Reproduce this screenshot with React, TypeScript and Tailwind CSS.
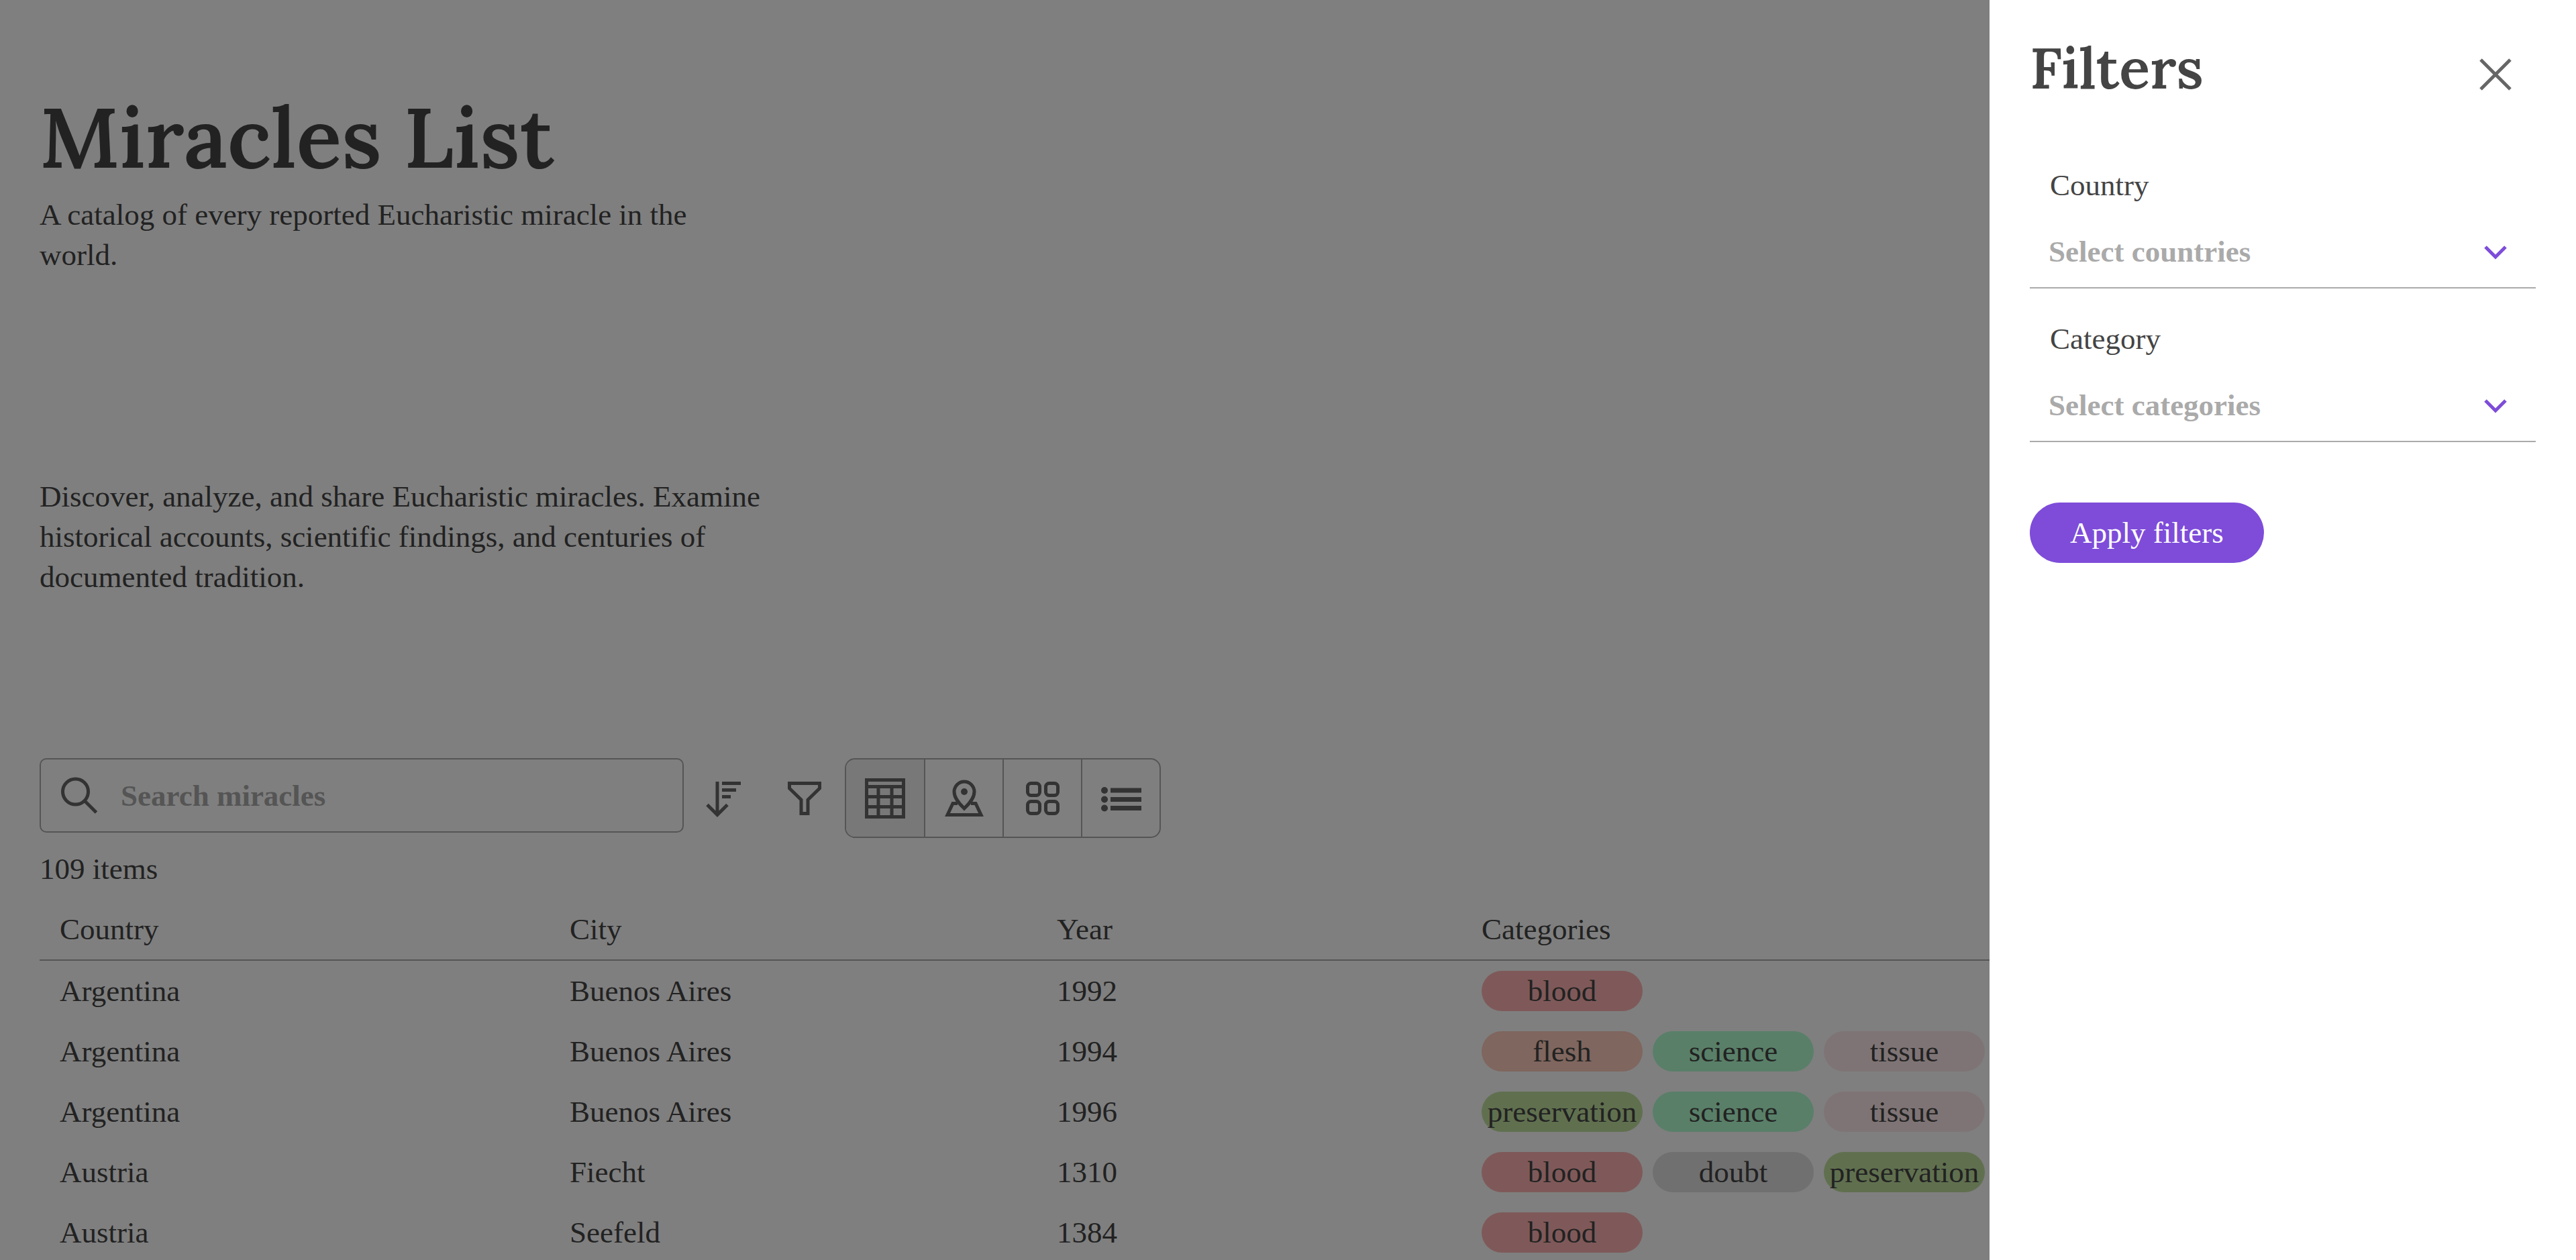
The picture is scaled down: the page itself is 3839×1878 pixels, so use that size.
const categoryColors: Record<string, string> = {
  blood: "bg-[#ffb3b3]",
  flesh: "bg-[#ffcdbd]",
  science: "bg-[#b3ffd0]",
  tissue: "bg-[#ffe8ea]",
  preservation: "bg-[#c0e09e]",
  doubt: "bg-[#e0e0e0]",
};

const miracles = [
  { country: "Argentina", city: "Buenos Aires", year: 1992, categories: ["blood"] },
  { country: "Argentina", city: "Buenos Aires", year: 1994, categories: ["flesh", "science", "tissue"] },
  { country: "Argentina", city: "Buenos Aires", year: 1996, categories: ["preservation", "science", "tissue"] },
  { country: "Austria", city: "Fiecht", year: 1310, categories: ["blood", "doubt", "preservation"] },
  { country: "Austria", city: "Seefeld", year: 1384, categories: ["blood"] },
];

function SearchIcon() {
  return (
    <svg className="h-[60px] w-[60px] shrink-0" viewBox="0 0 60 60" fill="none" stroke="#666" strokeWidth="5">
      <circle cx="22.5" cy="24" r="19" />
      <path d="M36 37.5l17.5 17.5" />
    </svg>
  );
}

function SortIcon() {
  return (
    <svg className="h-[60px] w-[60px]" viewBox="0 0 60 60" fill="none" stroke="#666" strokeWidth="5">
      <path d="M20 5v49M5 39.5l15 15 15-15M27 7.5h28M27 17.5h21M27 27.5h13" />
    </svg>
  );
}

function FilterIcon() {
  return (
    <svg className="h-[60px] w-[60px]" viewBox="0 0 60 60" fill="none" stroke="#666" strokeWidth="5">
      <path d="M7.5 7.5h45v7.5L35 32v20.5H25V32L7.5 15z" />
    </svg>
  );
}

function TableIcon() {
  return (
    <svg className="h-[60px] w-[60px]" viewBox="0 0 60 60" fill="none" stroke="#666" strokeWidth="5">
      <path d="M2.5 2.5h55v55h-55zM2.5 12.5h55M2.5 27.5h55M2.5 42.5h55M20 12.5v45M40 12.5v45" />
    </svg>
  );
}

function MapIcon() {
  return (
    <svg className="h-[60px] w-[60px]" viewBox="0 0 60 60" fill="none" stroke="#666" strokeWidth="5">
      <path d="M30 45C25 40 15 31 15 20a15 15 0 0 1 30 0c0 11-10 20-15 25z" />
      <path d="M20 37.5h-7L5 54.5h50l-8-17h-7" />
      <circle cx="30" cy="20" r="5" fill="#666" stroke="none" />
    </svg>
  );
}

function GridIcon() {
  return (
    <svg className="h-[60px] w-[60px]" viewBox="0 0 60 60" fill="none" stroke="#666" strokeWidth="5">
      <rect x="7.5" y="7.5" width="18" height="18" rx="5" />
      <rect x="34.5" y="7.5" width="18" height="18" rx="5" />
      <rect x="7.5" y="34.5" width="18" height="18" rx="5" />
      <rect x="34.5" y="34.5" width="18" height="18" rx="5" />
    </svg>
  );
}

function ListIcon() {
  return (
    <svg className="h-[60px] w-[60px]" viewBox="0 0 60 60" fill="#666">
      <circle cx="5" cy="18" r="5" />
      <circle cx="5" cy="31.5" r="5" />
      <circle cx="5" cy="44.5" r="5" />
      <path d="M14 14.500h46v7H14zM14 28h46v7H14zM14 41h46v7H14z" />
    </svg>
  );
}

function CloseIcon() {
  return (
    <svg className="h-[60px] w-[60px]" viewBox="0 0 60 60" fill="none" stroke="#666" strokeWidth="5">
      <path d="M8 8l44 44M52 8L8 52" />
    </svg>
  );
}

function ChevronIcon() {
  return (
    <svg
      className="pointer-events-none col-start-1 row-start-1 mr-[30px] h-[60px] w-[60px] self-center justify-self-end"
      viewBox="0 0 60 60"
      fill="none"
      stroke="#7e4cd9"
      strokeWidth="5"
    >
      <path d="M15 23l15 15 15-15" />
    </svg>
  );
}

const views = [
  { name: "Table view", icon: <TableIcon /> },
  { name: "Map view", icon: <MapIcon /> },
  { name: "Grid view", icon: <GridIcon /> },
  { name: "List view", icon: <ListIcon /> },
];

function FilterSelect({ id, label, placeholder }: { id: string; label: string; placeholder: string }) {
  return (
    <div className="flex flex-col">
      <label htmlFor={id} className="px-[30px]">
        {label}
      </label>
      <div className="mt-[15px] grid border-b-2 border-[#aaa]">
        <select
          id={id}
          className="col-start-1 row-start-1 h-[107px] w-full appearance-none bg-transparent pl-7 font-bold text-[#aaa]"
        >
          <option>{placeholder}</option>
        </select>
        <ChevronIcon />
      </div>
    </div>
  );
}

export default function App() {
  return (
    <div className="h-screen overflow-hidden bg-white font-['Liberation_Serif',serif] text-[45px] leading-[60px] text-[#444]">
      {/* Page */}
      <main className="flex flex-col pt-[129px] pr-[60px] pl-[59px]">
        <h1 className="mb-[11px] font-['Lora','Liberation_Serif',serif] text-[125px] leading-[150px] font-semibold">
          Miracles List
        </h1>
        <p className="max-w-[1080px]">A catalog of every reported Eucharistic miracle in the world.</p>
        <p className="mt-[300px] max-w-[1080px]">
          Discover, analyze, and share Eucharistic miracles. Examine historical accounts, scientific findings, and
          centuries of documented tradition.
        </p>

        {/* Toolbar */}
        <div className="mt-[240px] flex items-start">
          <label className="flex h-[111px] w-[960px] items-center gap-[30px] rounded-[10px] border-2 border-[#aaa] px-[29px]">
            <SearchIcon />
            <input
              type="search"
              aria-label="Search miracles"
              placeholder="Search miracles"
              className="min-w-0 flex-1 font-bold placeholder:text-[#aaa]"
            />
          </label>
          <button aria-label="Sort" className="flex h-[120px] w-[120px] items-center justify-center">
            <SortIcon />
          </button>
          <button aria-label="Filter" className="flex h-[120px] w-[120px] items-center justify-center">
            <FilterIcon />
          </button>
          <div className="flex h-[119px] overflow-hidden rounded-[15px] border-2 border-[#aaa]">
            {views.map((view, i) => (
              <button
                key={view.name}
                aria-label={view.name}
                className={
                  i === 0
                    ? "flex w-[116px] items-center justify-center bg-[#f0f0f0]"
                    : "flex w-[117px] items-center justify-center border-l-2 border-[#aaa]"
                }
              >
                {view.icon}
              </button>
            ))}
          </div>
        </div>

        <p className="mt-[15px]">109 items</p>

        {/* Table */}
        <table className="mt-[15px] w-full table-fixed border-collapse text-left">
          <thead>
            <tr className="border-b-2 border-[#aaa]">
              <th className="w-[760px] px-[30px] py-[15px] font-normal">Country</th>
              <th className="w-[726px] px-[30px] py-[15px] font-normal">City</th>
              <th className="w-[633px] px-[30px] py-[15px] font-normal">Year</th>
              <th className="px-[30px] py-[15px] font-normal">Categories</th>
            </tr>
          </thead>
          <tbody>
            {miracles.map((miracle) => (
              <tr key={`${miracle.city}-${miracle.year}`}>
                <td className="px-[30px] py-[15px]">{miracle.country}</td>
                <td className="px-[30px] py-[15px]">{miracle.city}</td>
                <td className="px-[30px] py-[15px]">{miracle.year}</td>
                <td className="px-[30px] py-[15px]">
                  <div className="flex gap-[15px]">
                    {miracle.categories.map((category) => (
                      <span key={category} className={`w-60 rounded-full text-center ${categoryColors[category]}`}>
                        {category}
                      </span>
                    ))}
                  </div>
                </td>
              </tr>
            ))}
          </tbody>
        </table>
      </main>

      {/* Filters drawer */}
      <div className="fixed inset-0 flex justify-end bg-black/50">
        <aside className="flex h-full w-[874px] flex-col bg-white px-[60px] pt-[51px]">
          <div className="flex h-[120px] items-center justify-between pr-[30px]">
            <h2 className="self-start font-['Lora','Liberation_Serif',serif] text-[85px] leading-[100px] font-semibold">
              Filters
            </h2>
            <button aria-label="Close filters">
              <CloseIcon />
            </button>
          </div>
          <form className="mt-[75px] flex flex-col gap-[45px]">
            <FilterSelect id="country" label="Country" placeholder="Select countries" />
            <FilterSelect id="category" label="Category" placeholder="Select categories" />
            <button type="submit" className="mt-[45px] h-[90px] self-start rounded-full bg-[#7e4cd9] px-[60px] text-white">
              Apply filters
            </button>
          </form>
        </aside>
      </div>
    </div>
  );
}
